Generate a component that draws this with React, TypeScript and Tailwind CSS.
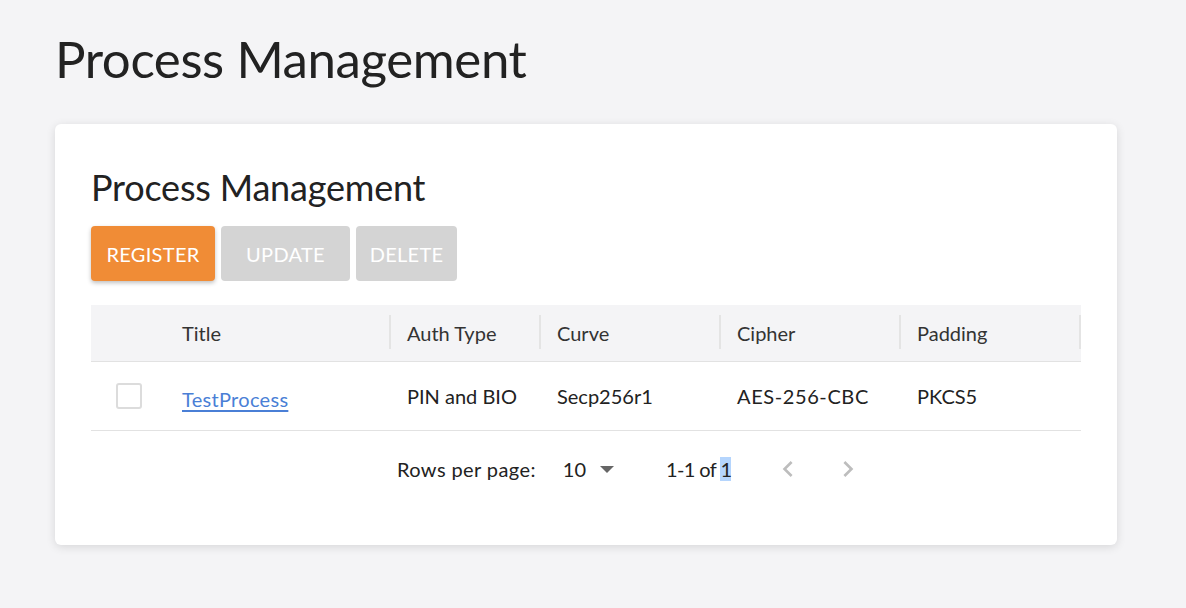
import React from 'react';

const columns = [
  { key: 'title', label: 'Title', width: 'w-[225px]' },
  { key: 'auth', label: 'Auth Type', width: 'w-[150px]' },
  { key: 'curve', label: 'Curve', width: 'w-[180px]' },
  { key: 'cipher', label: 'Cipher', width: 'w-[180px]' },
  { key: 'padding', label: 'Padding', width: 'w-[180px]' },
];

const rows = [
  { title: 'TestProcess', auth: 'PIN and BIO', curve: 'Secp256r1', cipher: 'AES-256-CBC', padding: 'PKCS5' },
];

function Chevron({ dir }: { dir: 'left' | 'right' }) {
  return (
    <svg width="32" height="32" viewBox="0 0 24 24" fill="#bdbdbd">
      {dir === 'left' ? (
        <path d="M15.41 7.41 14 6l-6 6 6 6 1.41-1.41L10.83 12z" />
      ) : (
        <path d="M10 6 8.59 7.41 13.17 12l-4.58 4.59L10 18l6-6z" />
      )}
    </svg>
  );
}

export default function App() {
  return (
    <div className="min-h-screen bg-[#f4f4f6] px-[55px] pt-[26px] pb-16 text-[#222] font-['Lato',sans-serif]">
      <h1 className="text-[51px] leading-[66px] font-normal tracking-[-0.4px] mb-[32px]">Process Management</h1>

      <div className="w-[1062px] bg-white rounded-[6px] shadow-[0_2px_10px_rgba(0,0,0,0.12)] px-[36px] pt-[40px] pb-[38px]">
        <h2 className="text-[36px] leading-[46px] font-normal tracking-[-0.2px]">Process Management</h2>

        <div className="flex gap-[6px] mt-[16px]">
          <button className="h-[55px] w-[124px] rounded-[4px] bg-[#f08c36] text-white text-[20px] tracking-[0.3px] shadow-[0_2px_4px_rgba(0,0,0,0.25)]">
            REGISTER
          </button>
          <button className="h-[55px] w-[129px] rounded-[4px] bg-[#d4d4d4] text-white text-[20px] tracking-[0.3px]">
            UPDATE
          </button>
          <button className="h-[55px] w-[101px] rounded-[4px] bg-[#d4d4d4] text-white text-[20px] tracking-[0.3px]">
            DELETE
          </button>
        </div>

        <div className="mt-[24px] w-[990px]">
          {/* header */}
          <div className="flex h-[57px] bg-[#f4f4f6] border-b border-[#e2e2e2] items-center text-[20px] text-[#333]">
            <div className="w-[75px]" />
            {columns.map((c) => (
              <div key={c.key} className={`${c.width} h-full flex items-center relative pl-[16px]`}>
                {c.label}
                <span className="absolute right-0 top-[10px] bottom-[12px] w-[2px] bg-[#e4e4e4]" />
              </div>
            ))}
          </div>

          {/* rows */}
          {rows.map((r) => (
            <div key={r.title} className="flex h-[69px] items-center border-b border-[#e2e2e2] text-[20px] text-[#222]">
              <div className="w-[75px] pl-[25px]">
                <span className="block w-[26px] h-[26px] border-2 border-[#dcdcdc] rounded-[3px] mt-[-1px]" />
              </div>
              <div className="w-[225px] pl-[16px] pt-[6px]">
                <a className="text-[#4a7fd6] underline underline-offset-[3px] tracking-[0.3px]" href="#">{r.title}</a>
              </div>
              <div className="w-[150px] pl-[16px]">{r.auth}</div>
              <div className="w-[180px] pl-[16px]">{r.curve}</div>
              <div className="w-[180px] pl-[16px] tracking-[0.6px]">{r.cipher}</div>
              <div className="w-[180px] pl-[16px]">{r.padding}</div>
            </div>
          ))}

          {/* pagination */}
          <div className="flex items-center h-[76px] text-[20px] text-[#222] pl-[306px]">
            <span className="tracking-[0.4px]">Rows per page:</span>
            <span className="ml-[27px]">10</span>
            <svg className="ml-[14px] mt-[2px]" width="14" height="8" viewBox="0 0 14 8" fill="#666">
              <path d="M0 0h14L7 7z" />
            </svg>
            <span className="ml-[52px] tracking-[-0.6px]">
              1-1 of <span className="bg-[#b5d5fd]">1</span>
            </span>
            <span className="ml-[41px] flex">
              <Chevron dir="left" />
            </span>
            <span className="ml-[28px] flex">
              <Chevron dir="right" />
            </span>
          </div>
        </div>
      </div>
    </div>
  );
}
